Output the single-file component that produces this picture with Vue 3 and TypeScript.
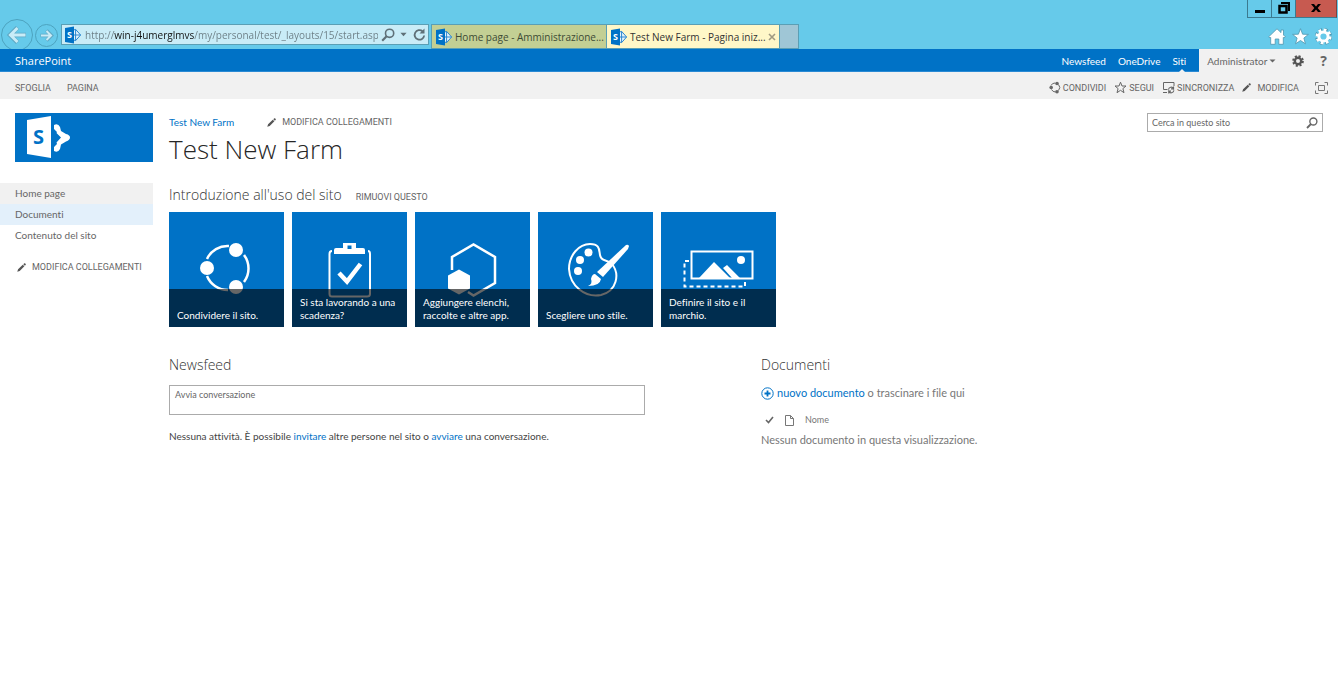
<script setup lang="ts">
import { ref } from 'vue'

interface Tab { title: string; active: boolean }
interface Tile { id: string; label: string }

const address = ref('http://win-j4umerglmvs/my/personal/test/_layouts/15/start.asp')
const query = ref('')
const post = ref('')

const tabs: Tab[] = [
  { title: 'Home page - Amministrazione...', active: false },
  { title: 'Test New Farm - Pagina iniz...', active: true },
]
const suiteLinks: string[] = ['Newsfeed', 'OneDrive', 'Siti']
const tiles: Tile[] = [
  { id: 'share', label: 'Condividere il sito.' },
  { id: 'deadline', label: 'Si sta lavorando a una scadenza?' },
  { id: 'apps', label: 'Aggiungere elenchi, raccolte e altre app.' },
  { id: 'style', label: 'Scegliere uno stile.' },
  { id: 'brand', label: 'Definire il sito e il marchio.' },
]
</script>

<template>
  <svg class="defs" aria-hidden="true">
    <symbol id="sp" viewBox="0 0 18 18">
      <path d="M9 4.200 11.600 3.400 16.600 9 11.600 14.600 9 13.800M11.600 3.400V14.600M9 9H16.600" fill="#e6f4fc" stroke="#2a86d0" stroke-width="1" />
      <path d="M1 2 10 .4V17.600L1 16Z" fill="#0072c6" />
    </symbol>
    <symbol id="pencil" viewBox="0 0 10 10">
      <path d="M.3 9.800 1.200 7 6.400 1.900 8.200 3.700 3 8.900ZM7 1.300 8.100.3Q8.600 0 9.200.5L9.700 1Q10 1.500 9.700 2L8.800 3Z" fill="#555" />
    </symbol>
    <symbol id="lens" viewBox="0 0 14 14">
      <circle cx="8.600" cy="5.300" r="4.100" fill="none" stroke="currentColor" stroke-width="1.600" />
      <path d="M5.600 8.300 1.200 12.800" stroke="currentColor" stroke-width="2.200" fill="none" />
    </symbol>
  </svg>

  <div class="page">
    <header class="chrome">
      <div class="window-buttons">
        <button class="win" aria-label="Riduci a icona">
          <svg width="12" height="12" viewBox="0 0 12 12"><path d="M1 9.500H11" stroke="#000" stroke-width="3" /></svg>
        </button>
        <button class="win" aria-label="Ripristina">
          <svg width="12" height="12" viewBox="0 0 12 12"><path d="M3 1H11V9" fill="none" stroke="#000" stroke-width="2" /><path d="M1.500 4H8.500V10.500H1.500Z" fill="none" stroke="#000" stroke-width="2.500" /></svg>
        </button>
        <button class="win close" aria-label="Chiudi">
          <svg width="12" height="12" viewBox="0 0 12 12"><path d="M1 2H4L6 4.500 8 2H11L7.700 6 11 10H8L6 7.500 4 10H1L4.300 6Z" fill="#000" /></svg>
        </button>
      </div>
      <div class="toolbar">
        <button class="nav back" aria-label="Indietro">
          <svg width="32" height="32" viewBox="0 0 32 32"><circle cx="16" cy="16" r="15.500" fill="#66caea" stroke="#4da3bf" /><path d="M16.500 8.500 9 16 16.500 23.500M9.500 16H25" fill="none" stroke="#5fa9c4" stroke-width="4.500" /><path d="M16.500 9 9.500 16 16.500 23M10 16H24.500" fill="none" stroke="#c9ecf7" stroke-width="3" /></svg>
        </button>
        <button class="nav" aria-label="Avanti">
          <svg width="23" height="23" viewBox="0 0 23 23"><circle cx="11.500" cy="11.500" r="11" fill="#66caea" stroke="#4da3bf" /><path d="M11.500 6.500 16.500 11.500 11.500 16.500M16 11.500H5.500" fill="none" stroke="#5fa9c4" stroke-width="3.500" /><path d="M11.500 7 16 11.500 11.500 16M15.500 11.500H6" fill="none" stroke="#c9ecf7" stroke-width="2" /></svg>
        </button>
        <div class="address">
          <svg class="site" width="18" height="18"><use href="#sp" /><text x="3" y="12">S</text></svg>
          <input v-model="address" class="url" type="text" aria-label="Indirizzo" />
          <button class="plain" aria-label="Cerca"><svg width="14" height="14"><use href="#lens" /></svg></button>
          <button class="plain caret" aria-label="Mostra indirizzi"><svg width="7" height="5" viewBox="0 0 8 5"><path d="M.5.500H7.500L4 4.500Z" fill="currentColor" /></svg></button>
          <button class="plain" aria-label="Aggiorna"><svg width="13" height="14" viewBox="0 0 13 14"><path d="M9.500 3.200A4.800 4.800 0 1 0 11.200 7.500" fill="none" stroke="currentColor" stroke-width="1.800" /><path d="M6.500 5.500H11.500V.5Z" fill="currentColor" /></svg></button>
        </div>
        <div class="tabs">
          <button v-for="tab in tabs" :key="tab.title" class="tab" :class="{ active: tab.active }">
            <svg class="site" width="18" height="18"><use href="#sp" /><text x="3" y="12">S</text></svg>
            <span>{{ tab.title }}</span>
            <svg v-if="tab.active" class="tab-close" width="8" height="8" viewBox="0 0 8 8"><path d="M1 1 7 7M7 1 1 7" stroke="#a09a82" stroke-width="1.600" /></svg>
          </button>
          <button class="new-tab" aria-label="Nuova scheda"></button>
        </div>
        <div class="chrome-tools">
          <button class="plain" aria-label="Pagina iniziale"><svg width="18" height="17" viewBox="0 0 18 17"><path d="M9 .8 13 4.600V2H15.500V7L17.300 8.800 16 10 15.300 9.400V16.300H10.800V11H7.200V16.300H2.700V9.400L2 10 .7 8.800Z" fill="#fff" stroke="#4f95ae" stroke-width=".8" /></svg></button>
          <button class="plain" aria-label="Preferiti"><svg width="17" height="17" viewBox="0 0 17 17"><path d="M8.500.7 10.600 6.200 16.400 6.400 11.900 10 13.400 15.800 8.500 12.500 3.600 15.800 5.100 10 .6 6.400 6.400 6.200Z" fill="#fff" stroke="#4f95ae" stroke-width=".8" /></svg></button>
          <button class="plain" aria-label="Strumenti"><svg width="17" height="17" viewBox="0 0 17 17"><circle cx="8.500" cy="8.500" r="6.500" fill="none" stroke="#4f95ae" stroke-width="4" stroke-dasharray="3.100 2" /><circle cx="8.500" cy="8.500" r="4.600" fill="none" stroke="#fff" stroke-width="3" /><circle cx="8.500" cy="8.500" r="6.600" fill="none" stroke="#fff" stroke-width="2.800" stroke-dasharray="2.700 2.480" /></svg></button>
        </div>
      </div>
    </header>

    <div class="suite">
      <a class="brand" href="#">SharePoint</a>
      <nav class="suite-links">
        <a v-for="link in suiteLinks" :key="link" href="#" :class="{ current: link === 'Siti' }">{{ link }}</a>
      </nav>
      <div class="account">
        <button class="plain user">Administrator<svg width="7" height="4" viewBox="0 0 7 4"><path d="M.5.500H6.500L3.500 3.500Z" fill="currentColor" /></svg></button>
        <button class="plain" aria-label="Impostazioni"><svg width="12" height="12" viewBox="0 0 12 12"><circle cx="6" cy="6" r="3.200" fill="none" stroke="#555" stroke-width="2.400" /><circle cx="6" cy="6" r="4.900" fill="none" stroke="#555" stroke-width="1.900" stroke-dasharray="2.100 1.748" /></svg></button>
        <button class="plain help" aria-label="Guida">?</button>
      </div>
    </div>

    <div class="ribbon">
      <div class="ribbon-tabs">
        <button class="plain">SFOGLIA</button>
        <button class="plain">PAGINA</button>
      </div>
      <div class="ribbon-actions">
        <button class="plain"><svg width="12" height="13" viewBox="0 0 12 13"><path d="M2 4.500A4.500 4.500 0 0 1 6 2M9.500 3.500A4.500 4.500 0 0 1 9.500 9.500M6.500 11A4.500 4.500 0 0 1 2.500 8.500" fill="none" stroke="currentColor" /><circle cx="8" cy="2.500" r="1.800" fill="currentColor" /><circle cx="2.200" cy="6.500" r="1.800" fill="currentColor" /><circle cx="8" cy="10.700" r="1.800" fill="currentColor" /></svg>CONDIVIDI</button>
        <button class="plain"><svg width="13" height="13" viewBox="0 0 13 13"><path d="M6.500 1.200 8 5H12L8.900 7.600 10 11.700 6.500 9.300 3 11.700 4.100 7.600 1 5H5Z" fill="none" stroke="currentColor" /></svg>SEGUI</button>
        <button class="plain"><svg width="13" height="13" viewBox="0 0 13 13"><path d="M5.500 8.500H1.500V1.500H12V5" fill="none" stroke="currentColor" /><path d="M1 11.500H5" stroke="currentColor" /><path d="M6.500 8.500A2.700 2.700 0 0 1 11.500 7.500V5.500M11.800 9.500A2.700 2.700 0 0 1 6.800 10.500V12.500M11.500 7.800H9M6.800 10.200H9" fill="none" stroke="currentColor" stroke-width="1.200" /></svg>SINCRONIZZA</button>
        <button class="plain edit"><svg width="9" height="9"><use href="#pencil" /></svg>MODIFICA</button>
        <button class="plain focus" aria-label="Stato attivo sul contenuto"><svg width="13" height="12" viewBox="0 0 13 12"><path d="M3.500 3.500H9.500V8.500H3.500ZM.5 3.500V.5H3.500M9.500.5H12.500V3.500M12.500 8.500V11.500H9.500M3.500 11.500H.5V8.500" fill="none" stroke="#777" /></svg></button>
      </div>
    </div>

    <div class="body">
      <aside class="side">
        <a class="logo" href="#" aria-label="SharePoint">
          <svg width="44" height="44" viewBox="0 0 44 44">
            <path d="M27 10Q31 8 33 12L34 16 39 19Q43 20 43 22.500T39 26.500L34 29.500 33 34Q31 38 27 36V32L30 29 29.500 27.500 34 22.500 29.500 18 30 17 27 14Z" fill="#fff" />
            <path d="M0 5 24 1V43L0 39Z" fill="#fff" />
            <text x="6" y="29" font-size="20" font-weight="700" font-family="Open Sans, sans-serif" fill="#0072c6">S</text>
          </svg>
        </a>
        <nav class="side-nav">
          <a class="home" href="#">Home page</a>
          <a class="docs" href="#">Documenti</a>
          <a href="#">Contenuto del sito</a>
        </nav>
        <button class="plain edit-links"><svg width="9" height="9"><use href="#pencil" /></svg>MODIFICA COLLEGAMENTI</button>
      </aside>

      <main class="main">
        <div class="top">
          <div class="heading">
            <div class="crumbs">
              <a href="#">Test New Farm</a>
              <button class="plain edit-links"><svg width="9" height="9"><use href="#pencil" /></svg>MODIFICA COLLEGAMENTI</button>
            </div>
            <h1>Test New Farm</h1>
          </div>
          <form class="search" @submit.prevent>
            <input v-model="query" type="text" placeholder="Cerca in questo sito" aria-label="Cerca in questo sito" />
            <button class="plain" aria-label="Cerca"><svg width="12" height="12" viewBox="0 0 14 14"><use href="#lens" /></svg></button>
          </form>
        </div>

        <div class="intro">
          <h2>Introduzione all'uso del sito</h2>
          <button class="plain">RIMUOVI QUESTO</button>
        </div>
        <div class="tiles">
          <a v-for="tile in tiles" :key="tile.id" class="tile" href="#">
            <svg width="115" height="115" viewBox="0 0 115 115" fill="none" stroke="#fff" stroke-width="2.500">
              <g v-if="tile.id === 'share'">
                <path d="M38 47A22.500 22.500 0 0 1 60 34M75 43A22.500 22.500 0 0 1 75 70M59 78A22.500 22.500 0 0 1 38 64" />
                <g fill="#fff" stroke="none"><circle cx="67" cy="38" r="7" /><circle cx="38" cy="56" r="7" /><circle cx="67" cy="75" r="7" /></g>
              </g>
              <g v-else-if="tile.id === 'deadline'">
                <path d="M40 39Q37.500 39 37.500 42V82Q37.500 84.500 40 84.500H75Q78 84.500 78 82V42Q78 39 76 39" stroke-width="2" />
                <path d="M51 31H64V36H71Q73 36 73 38V42H42V38Q42 36 44 36H51ZM55.500 33.500V37H59.500V33.500Z" fill="#fff" stroke="none" fill-rule="evenodd" />
                <path d="M47 61 55 69.500 68.500 52" stroke-width="4.500" />
              </g>
              <g v-else-if="tile.id === 'apps'">
                <path d="M37 58V45L58.500 32.500 80 45V71L58.500 83.500 53 80" />
                <path d="M44 57.500 55 63.500V76.500L44 82.500 33 76.500V63.500Z" fill="#fff" stroke="none" />
              </g>
              <g v-else-if="tile.id === 'style'">
                <path d="M74 52C82 62 79 79 63 83C47 86 32 74 31 57C31 43 41 32 52 32C62 32 61 38 62 43C63 50 69 47 72 51" stroke-width="2" />
                <g fill="#fff" stroke="none">
                  <circle cx="50.500" cy="40.500" r="4" /><circle cx="42" cy="48" r="4" /><circle cx="40" cy="59" r="4" />
                  <path d="M88 33Q90 32 91 34L90 37 65 65 59 60Z" />
                  <path d="M57 62 63 67Q62 74 50 74Q55 72 53 67Q54 62 57 62Z" />
                </g>
              </g>
              <g v-else>
                <path d="M30.500 39.500H91.500V66.500H30.500Z" stroke-width="2" />
                <path d="M28 49H23.500V74.500H84V70" stroke-width="2" stroke-dasharray="4 3" />
                <g fill="#fff" stroke="none"><path d="M38 66 53 50 69 66ZM62 56 66 53 79 66H71Z" /><circle cx="80" cy="48" r="4" /></g>
              </g>
            </svg>
            <span class="caption"><span>{{ tile.label }}</span></span>
          </a>
        </div>

        <div class="columns">
          <section>
            <h2>Newsfeed</h2>
            <textarea v-model="post" rows="1" placeholder="Avvia conversazione" aria-label="Avvia conversazione"></textarea>
            <p class="empty">Nessuna attività. È possibile <a href="#">invitare</a> altre persone nel sito o <a href="#">avviare</a> una conversazione.</p>
          </section>
          <section class="documents">
            <h2>Documenti</h2>
            <p class="new-doc">
              <svg width="13" height="13" viewBox="0 0 13 13"><circle cx="6.500" cy="6.500" r="5.700" fill="none" stroke="#0072c6" /><path d="M6.500 3.500V9.500M3.500 6.500H9.500" stroke="#0072c6" stroke-width="1.800" /></svg>
              <span><a href="#">nuovo documento</a> o trascinare i file qui</span>
            </p>
            <table>
              <thead>
                <tr>
                  <th aria-label="Seleziona"><svg width="9" height="8" viewBox="0 0 9 8"><path d="M1 4 3.500 6.500 8 1" fill="none" stroke="#666" stroke-width="1.600" /></svg></th>
                  <th aria-label="Tipo"><svg width="9" height="11" viewBox="0 0 9 11"><path d="M.5.500H5.500L8.500 3.500V10.500H.5ZM5.500.5V3.500H8.500" fill="none" stroke="#777" /></svg></th>
                  <th>Nome</th>
                </tr>
              </thead>
              <tbody><tr><td colspan="3">Nessun documento in questa visualizzazione.</td></tr></tbody>
            </table>
          </section>
        </div>
      </main>
    </div>
  </div>
</template>

<style>
body { margin: 0; background: #fff; }
</style>

<style scoped>
.defs { position: absolute; width: 0; height: 0; }
.page { font-family: Lato, "Open Sans", sans-serif; font-variant-ligatures: none; font-size: 10px; line-height: 14px; color: #444; }
.page * { box-sizing: border-box; }
svg { display: block; flex: none; }
a { color: #0072c6; text-decoration: none; }
button, input, textarea { font: inherit; font-variant-ligatures: none; color: inherit; margin: 0; }
h1, h2, p { margin: 0; font-weight: 400; }
.plain { display: flex; align-items: center; padding: 0; border: 0; background: none; color: #666; white-space: nowrap; }
.site text { font: 700 9px "Open Sans", sans-serif; fill: #fff; }

.chrome { height: 49px; background: #66caea; overflow: hidden; }
.window-buttons { display: flex; justify-content: flex-end; height: 18px; padding-right: 1px; }
.win { display: flex; align-items: center; justify-content: center; width: 24px; padding: 0 0 2px; border: 1px solid #3b7a90; border-top: 0; border-right: 0; background: #66caea; }
.win.close { width: 42px; border-right: 1px solid #7d4440; background: #c75a50; }
.toolbar { display: flex; align-items: flex-start; padding: 6px 6px 0 1px; }
.nav { flex: none; padding: 0; border: 0; background: none; margin-left: 2px; }
.nav.back { margin: -5px 0 0; }
.address { display: flex; align-items: center; flex: none; gap: 3px; width: 368px; height: 21px; margin: 0 2px 0 3px; padding: 0 2px; border: 1px solid #5a9fb5; background: #c9ecf7; }
.address .plain { color: #5f7078; }
.address .caret { margin: 0 3px 0 2px; }
.url { flex: 1; min-width: 0; height: 19px; padding: 0; border: 0; outline: 0; font-family: "Open Sans", sans-serif; font-size: 10px; color: #6b7d84; background: linear-gradient(90deg, #6b7d84 29px, #111 29px, #111 109px, #6b7d84 109px); background-clip: text; -webkit-background-clip: text; -webkit-text-fill-color: transparent; }
.tabs { display: flex; height: 25px; }
.tab { display: flex; align-items: center; gap: 2px; width: 175px; padding: 0 1px 0 3px; border: 1px solid #5a9fb5; border-right: 0; background: #c3cf94; font-family: "Open Sans", sans-serif; font-size: 10px; color: #3d4a35; white-space: nowrap; }
.tab.active { width: 173px; background: #fff7c8; color: #333; }
.tab-close { margin: 0 3px 0 auto; }
.new-tab { width: 20px; padding: 0; border: 1px solid #5a9fb5; background: #9fc6d6; }
.chrome-tools { display: flex; align-items: center; gap: 6px; height: 24px; margin-left: auto; }

.suite { display: flex; align-items: stretch; height: 23px; background: #0072c6; border-bottom: 1px solid #2a8ad4; }
.brand { flex: 1; padding-left: 15px; line-height: 24px; font-family: "Open Sans", sans-serif; font-size: 11px; color: #fff; }
.suite-links { display: flex; gap: 12px; padding-right: 13px; line-height: 24px; }
.suite-links a { position: relative; color: #fff; }
.current::after { content: ""; position: absolute; left: 50%; bottom: -1px; border: 3px solid transparent; border-top: 0; border-bottom-color: #f1f1f1; }
.account { display: flex; align-items: center; gap: 16px; margin-bottom: -1px; padding: 0 11px 0 8px; background: #f1f1f1; }
.user { gap: 2px; }
.help { font-family: "Open Sans", sans-serif; font-size: 14px; font-weight: 700; }

.ribbon { display: flex; align-items: center; justify-content: space-between; height: 27px; padding: 4px 10px 0 15px; background: #f1f1f1; font-family: Roboto, sans-serif; font-size: 9px; }
.ribbon-tabs { display: flex; gap: 16px; }
.ribbon-actions { display: flex; align-items: center; gap: 8px; }
.ribbon-actions .plain { gap: 2px; }
.ribbon-actions .edit { gap: 6px; }
.ribbon-actions .focus { margin-left: 8px; }

.body { display: flex; padding: 14px 15px 0 0; }
.side { flex: none; width: 153px; margin-right: 16px; }
.logo { display: block; height: 49px; margin-left: 15px; padding: 2px 12px; background: #0072c6; }
.side-nav { display: grid; margin-top: 21px; }
.side-nav a { padding-left: 15px; line-height: 21px; color: #666; }
.side-nav .home { background: #f1f1f1; }
.side-nav .docs { background: #e3f0fb; }
.edit-links { gap: 6px; font-family: Roboto, sans-serif; font-size: 9px; }
.side .edit-links { margin: 14px 0 0 17px; }

.main { flex: 1; min-width: 0; }
.top { display: flex; justify-content: space-between; align-items: flex-start; }
.crumbs { display: flex; align-items: center; gap: 33px; height: 18px; }
h1, h2 { font-family: "Open Sans", sans-serif; font-weight: 300; }
h1 { font-size: 26px; line-height: 36px; color: #262626; }
h2 { font-size: 14px; line-height: 20px; color: #333; }
.search { display: flex; align-items: center; width: 176px; height: 19px; padding: 0 4px; border: 1px solid #ababab; }
.search input { flex: 1; min-width: 0; padding: 0; border: 0; outline: 0; font-size: 9px; background: none; }
input::placeholder, textarea::placeholder { color: #666; opacity: 1; }
.intro { display: flex; align-items: center; gap: 14px; margin-top: 18px; }
.intro .plain { font-family: Roboto, sans-serif; font-size: 9px; padding-top: 3px; }
.tiles { display: flex; flex-wrap: wrap; gap: 8px; margin-top: 7px; }
.tile { position: relative; width: 115px; height: 115px; background: #0072c6; color: #fff; }
.caption { position: absolute; inset: auto 0 0; display: flex; align-items: flex-end; height: 38px; padding: 0 8px 5px; background: rgba(0, 0, 0, .6); line-height: 13px; }
.columns { display: grid; grid-template-columns: 592fr 562fr; margin-top: 28px; }
textarea { display: block; width: 100%; max-width: 476px; height: 30px; margin-top: 10px; padding: 2px 5px; border: 1px solid #ababab; resize: none; font-size: 9px; line-height: 14px; }
.empty { margin-top: 14px; }
.documents { color: #777; font-size: 11px; }
.new-doc { display: flex; align-items: center; gap: 3px; height: 16px; margin-top: 10px; }
table { margin-top: 11px; border-collapse: collapse; }
th { height: 16px; padding: 0 0 0 4px; text-align: left; font-size: 9px; font-weight: 400; width: 20px; }
th:last-child { width: auto; }
td { height: 24px; padding: 0; }
</style>
